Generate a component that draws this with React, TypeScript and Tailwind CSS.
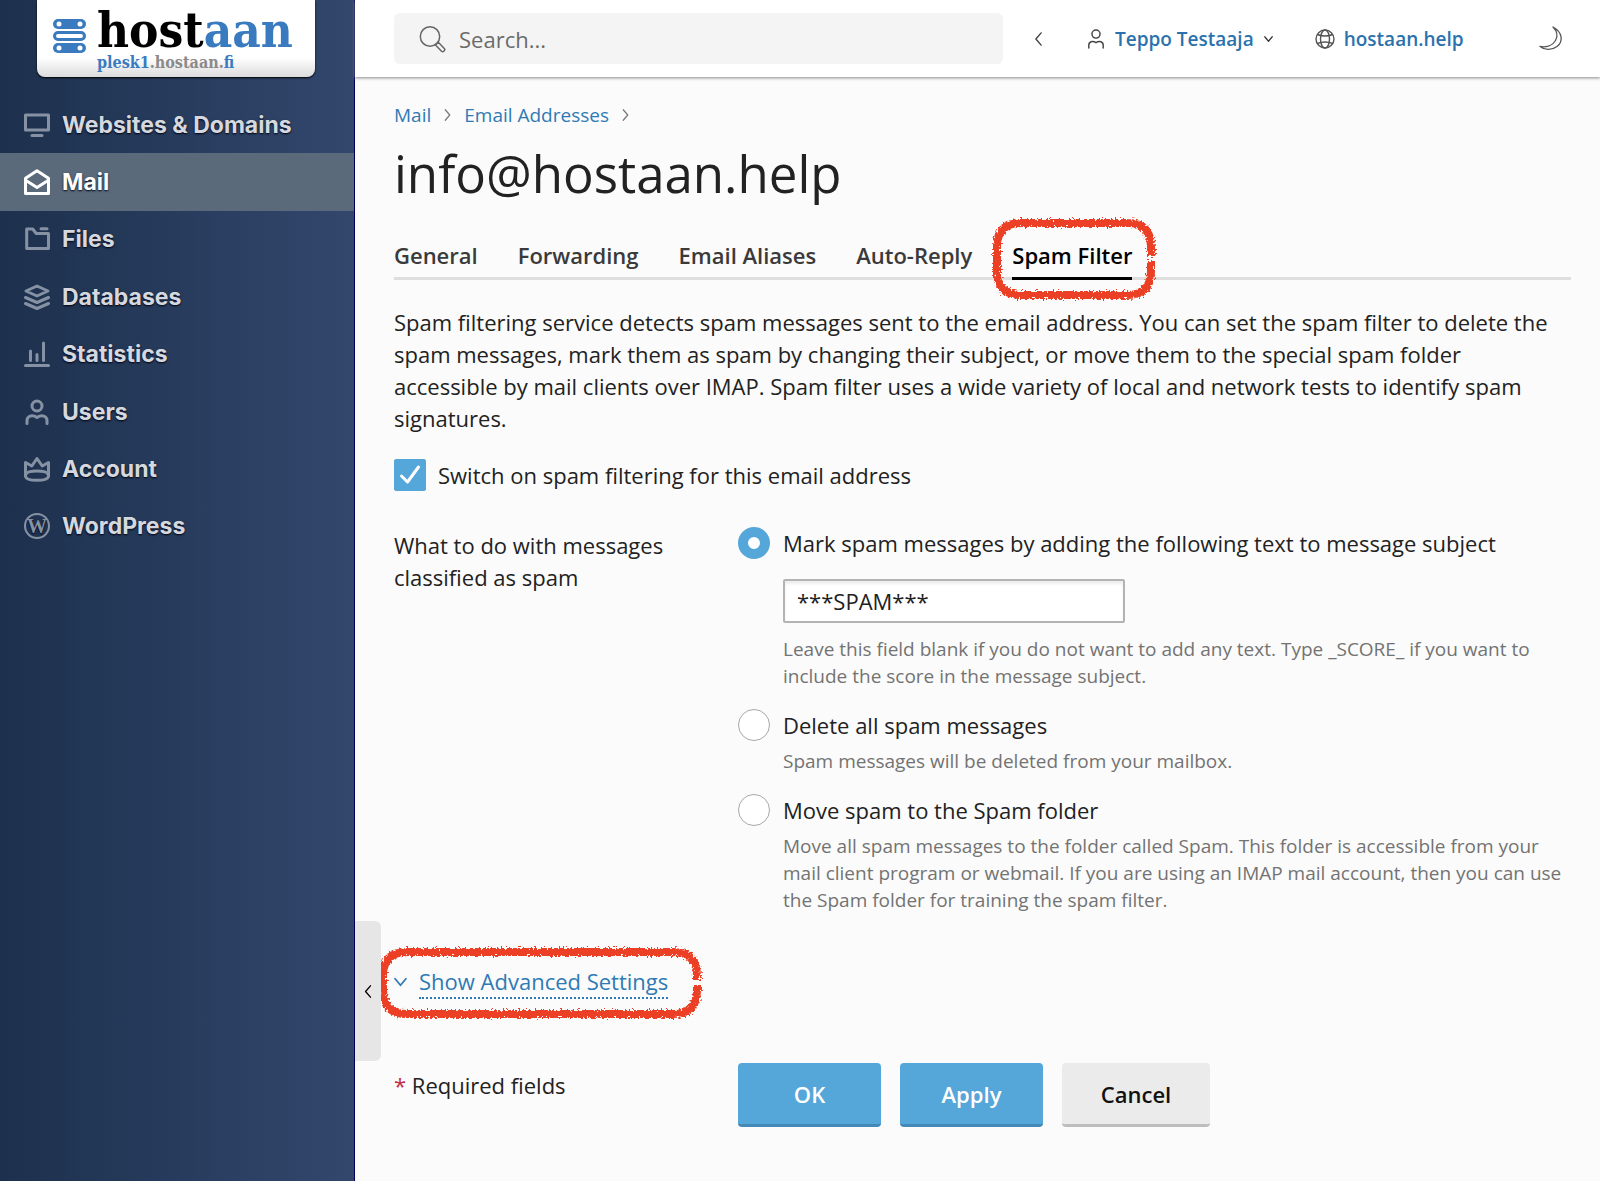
import { useState } from 'react';
import type { ReactNode } from 'react';

type IconProps = { children: ReactNode };

function NavIcon({ children }: IconProps) {
    return (
        <svg viewBox="0 0 26 26" className="size-[26px] shrink-0" fill="none" stroke="currentColor" strokeWidth="3" strokeLinecap="round" strokeLinejoin="round" aria-hidden="true">
            {children}
        </svg>
    );
}

const navItems = [
    {
        label: 'Websites & Domains',
        icon: (
            <NavIcon>
                <path d="M1.5 3h23v15h-23z" />
                <path d="M8 23.5h10" />
            </NavIcon>
        ),
    },
    {
        label: 'Mail',
        icon: (
            <NavIcon>
                <path d="M1.5 9.2 13 1.8l11.5 7.4v15.3h-23z" />
                <path d="m2 11.5 11 7 11-7" />
            </NavIcon>
        ),
    },
    {
        label: 'Files',
        icon: (
            <NavIcon>
                <path d="M2.7 3h6l3.5 4.5h12.3v15H2.7z" />
                <path d="M17 2.7h6" />
            </NavIcon>
        ),
    },
    {
        label: 'Databases',
        icon: (
            <NavIcon>
                <path d="M13 2 24 7l-11 5L2 7z" />
                <path d="m1.5 13.5 11.5 5 11.5-5" />
                <path d="m1.5 19.5 11.5 5 11.5-5" />
            </NavIcon>
        ),
    },
    {
        label: 'Statistics',
        icon: (
            <NavIcon>
                <path d="M1.5 24.5h23M6.5 10v9.5M13 13.5v6M19.5 2v17.5" />
            </NavIcon>
        ),
    },
    {
        label: 'Users',
        icon: (
            <NavIcon>
                <circle cx="13" cy="7" r="5" />
                <path d="M3 24.5v-3c0-4 5-6.5 10-3 5-3.5 10-1 10 3v3" />
            </NavIcon>
        ),
    },
    {
        label: 'Account',
        icon: (
            <NavIcon>
                <path d="M1.5 6.5v14c1 5 22 5 23 0v-14l-6.3 3.5L13 2.5 7.8 10z" />
                <path d="M2 18c2-4 20-4 22 0" />
            </NavIcon>
        ),
    },
    {
        label: 'WordPress',
        icon: (
            <NavIcon>
                <circle cx="13" cy="13" r="12" strokeWidth="2" />
                <text x="13" y="20" textAnchor="middle" fontFamily="Liberation Serif, serif" fontWeight="bold" fontSize="20" fill="currentColor" stroke="none">
                    W
                </text>
            </NavIcon>
        ),
    },
];

const tabs = ['General', 'Forwarding', 'Email Aliases', 'Auto-Reply', 'Spam Filter'];

function Chevron({ dir, className }: { dir: 'left' | 'right' | 'down'; className: string }) {
    const paths = {
        left: 'M9 1 3 8l6 7',
        right: 'M3 1l6 7-6 7',
        down: 'M1 5l5 6 5-6',
    };
    return (
        <svg viewBox="0 0 12 16" className={className} fill="none" stroke="currentColor" strokeWidth="1.6" strokeLinecap="round" strokeLinejoin="round" aria-hidden="true">
            <path d={paths[dir]} />
        </svg>
    );
}

// Hand-drawn marker outline around an element; w/h are the outer size
function Marker({ w, h, className }: { w: number; h: number; className: string }) {
    const r = 24;
    const p = 6;
    const mid = h / 2;
    const d = `M${w - p} ${mid - 3}V${p + r}Q${w - p} ${p} ${w - p - r} ${p}H${p + r}Q${p} ${p} ${p} ${p + r}V${h - p - r}Q${p} ${h - p} ${p + r} ${h - p}H${w - p - r}Q${w - p} ${h - p} ${w - p} ${h - p - r}V${mid + 2}`;
    return (
        <svg viewBox={`0 0 ${w} ${h}`} className={className} fill="none" aria-hidden="true">
            <defs>
                <filter id={`rough-${w}`} x="-5%" y="-10%" width="110%" height="120%">
                    <feTurbulence type="fractalNoise" baseFrequency="0.5" numOctaves="3" seed="4" />
                    <feDisplacementMap in="SourceGraphic" scale="8" xChannelSelector="R" yChannelSelector="G" />
                </filter>
            </defs>
            <path d={d} stroke="#ec4125" strokeWidth="8" filter={`url(#rough-${w})`} />
        </svg>
    );
}

function Logo() {
    return (
        <a href="#home" className="ml-[37px] flex h-[77px] w-[278px] gap-[11px] rounded-b-lg bg-linear-to-b from-white from-75% to-[#dcdcdc] pl-4 shadow-[0_1px_2px_#000]">
            <svg viewBox="0 0 33 34" className="mt-[19px] h-[34px] w-[33px] shrink-0" aria-hidden="true">
                <rect width="33" height="10" rx="5" fill="#3a7bc0" />
                <rect x="1.5" y="13.5" width="30" height="7" rx="3.5" fill="none" stroke="#3a7bc0" strokeWidth="3" />
                <rect y="24" width="33" height="10" rx="5" fill="#3a7bc0" />
                <g fill="#fff">
                    <circle cx="6" cy="5" r="2.5" />
                    <circle cx="27" cy="5" r="2.5" />
                    <circle cx="6" cy="29" r="2.5" />
                    <circle cx="27" cy="29" r="2.5" />
                </g>
            </svg>
            <span className="flex flex-col pt-[7px] font-['DejaVu_Serif_Condensed','DejaVu_Serif',serif] font-bold">
                <span className="text-[49px] leading-[46px] text-black">
                    host<span className="text-[#3a7bc0]">aan</span>
                </span>
                <span className="text-base leading-5 text-[#8a8a8a]">
                    <span className="text-[#3a7bc0]">plesk1</span>.hostaan.<span className="text-[#3a7bc0]">fi</span>
                </span>
            </span>
        </a>
    );
}

function Sidebar() {
    return (
        <aside className="w-[355px] shrink-0 border-r border-[#00005c] bg-linear-to-r from-[#1d304d] via-[#273c5d] to-[#33476d]">
            <Logo />
            <nav className="mt-[19px] grid h-[459px] auto-rows-fr font-[Inter,sans-serif] text-[23px] font-bold">
                {navItems.map((item) => (
                    <a
                        key={item.label}
                        href={`#${item.label}`}
                        className={`flex items-center gap-3 pl-6 [text-shadow:0_1px_2px_#001] ${item.label === 'Mail' ? 'bg-[#5a6a7b] text-white' : 'text-[#d5d9df]'}`}
                    >
                        <span className={item.label === 'Mail' ? '' : 'text-[#8692a4]'}>{item.icon}</span>
                        {item.label}
                    </a>
                ))}
            </nav>
        </aside>
    );
}

function Header() {
    return (
        <header className="relative flex h-[77px] items-center bg-white pr-[37px] pl-[39px] shadow-[0_1px_3px_#888]">
            <label className="flex h-[51px] w-[609px] items-center gap-3 rounded-md bg-[#f4f4f4] pl-[25px]">
                <svg viewBox="0 0 28 28" className="size-7 shrink-0" fill="none" stroke="#666" strokeWidth="1.5" aria-hidden="true">
                    <circle cx="11" cy="11.5" r="9.7" />
                    <path d="m16.5 20 2.8-2.8 6 6.2c1.5 1.7-1.2 4.3-2.8 2.8z" strokeLinejoin="round" />
                </svg>
                <input type="search" aria-label="Search" placeholder="Search..." className="w-full bg-transparent text-[22px] outline-none placeholder:text-[#6b6b6b]" />
            </label>
            <button type="button" aria-label="Collapse" className="ml-[30px] text-[#444]">
                <Chevron dir="left" className="h-[14px] w-[11px]" />
            </button>
            <button type="button" className="ml-[43px] flex items-center gap-[10px] text-[19px] font-semibold text-[#2b72ad]">
                <svg viewBox="0 0 20 24" className="h-6 w-[18px]" fill="none" stroke="#444" strokeWidth="1.6" strokeLinecap="round" aria-hidden="true">
                    <circle cx="10" cy="6.5" r="4.5" />
                    <path d="M2 22v-3c0-4 4-5.5 8-3 4-2.5 8-1 8 3v3" />
                </svg>
                Teppo Testaaja
                <Chevron dir="down" className="h-3 w-[9px] text-[#333]" />
            </button>
            <a href="#domain" className="ml-[42px] flex items-center gap-[9px] text-[19px] font-semibold text-[#2b72ad]">
                <svg viewBox="0 0 20 20" className="size-5" fill="none" stroke="#555" strokeWidth="1.4" aria-hidden="true">
                    <circle cx="10" cy="10" r="9" />
                    <ellipse cx="10" cy="10" rx="4.5" ry="9" />
                    <path d="M2.5 5.5c4 2 11 2 15 0M2.5 14.5c4-2 11-2 15 0" />
                </svg>
                hostaan.help
            </a>
            <button type="button" aria-label="Dark mode" className="ml-auto">
                <svg viewBox="0 0 24 26" className="h-[26px] w-6" fill="none" stroke="#555" strokeWidth="1.3" strokeLinejoin="round" aria-hidden="true">
                    <path d="M14 1C23 6 25 15 18 20.500 13 24.500 5 24 1 20.500 8 21.500 14 19 16.500 14.500 19 10 18 5 14 1z" />
                </svg>
            </button>
        </header>
    );
}

type RadioProps = {
    value: string;
    label: string;
    checked: boolean;
    onSelect: (value: string) => void;
    children: ReactNode;
};

function RadioOption({ value, label, checked, onSelect, children }: RadioProps) {
    return (
        <div>
            <label className="flex gap-[13px]">
                <input
                    type="radio"
                    name="spam-action"
                    value={value}
                    checked={checked}
                    onChange={() => onSelect(value)}
                    className="size-8 shrink-0 appearance-none rounded-full border border-[#a8a8a8] bg-white checked:border-[10px] checked:border-[#55a6d9]"
                />
                {label}
            </label>
            <div className="pl-[45px]">{children}</div>
        </div>
    );
}

function Hint({ children }: { children: ReactNode }) {
    return <p className="text-[19px] leading-[27px] text-[#737373]">{children}</p>;
}

const buttonBase = 'h-16 rounded-sm border-b-[3px] px-[38px] text-[22px] font-semibold';

export default function App() {
    const [enabled, setEnabled] = useState(true);
    const [action, setAction] = useState('mark');
    const [subject, setSubject] = useState('***SPAM***');

    return (
        <div className="flex min-h-screen bg-[#fbfbfb] font-['Open_Sans',sans-serif] text-[22px] leading-8 text-[#222]">
            <Sidebar />
            <div className="relative min-w-0 flex-1">
                <Header />
                <main className="pr-[29px] pb-[52px] pl-[39px]">
                    <nav aria-label="Breadcrumb" className="flex items-center gap-3 pt-6 text-[19px] leading-7 text-[#2f7ab5]">
                        <a href="#mail">Mail</a>
                        <Chevron dir="right" className="h-[14px] w-[9px] text-[#777]" />
                        <a href="#addresses">Email Addresses</a>
                        <Chevron dir="right" className="h-[14px] w-[9px] text-[#777]" />
                    </nav>
                    <h1 className="mt-2 text-[51px] leading-[72px]">info@hostaan.help</h1>

                    <div role="tablist" className="mt-[30px] flex gap-10 border-b-[3px] border-[#dedede] font-semibold text-[#3a3a3a]">
                        {tabs.map((tab) => {
                            const active = tab === 'Spam Filter';
                            return (
                                <button
                                    key={tab}
                                    type="button"
                                    role="tab"
                                    aria-selected={active}
                                    className={`relative -mb-[3px] border-b-[3px] pb-[6px] ${active ? 'border-black text-black' : 'border-transparent'}`}
                                >
                                    {tab}
                                    {active && <Marker w={166} h={84} className="absolute -top-[22px] -left-[21px] h-[84px] w-[166px] max-w-none" />}
                                </button>
                            );
                        })}
                    </div>

                    <p className="mt-[26px] pr-3">
                        Spam filtering service detects spam messages sent to the email address. You can set the spam filter to delete the spam messages, mark them as spam by changing their subject, or move them to the special spam folder accessible by mail clients over IMAP. Spam filter uses a wide variety of local and network tests to identify spam signatures.
                    </p>

                    <label className="mt-[25px] flex gap-3">
                        <span className="relative size-8">
                            <input
                                type="checkbox"
                                checked={enabled}
                                onChange={(e) => setEnabled(e.target.checked)}
                                className="block size-8 appearance-none rounded-xs border border-[#a8a8a8] bg-white checked:border-[#55a6d9] checked:bg-[#55a6d9]"
                            />
                            {enabled && (
                                <svg viewBox="0 0 32 32" className="pointer-events-none absolute inset-0 size-8" fill="none" stroke="#fff" strokeWidth="3" strokeLinecap="round" strokeLinejoin="round" aria-hidden="true">
                                    <path d="m7.5 17 6 6L24.5 8" />
                                </svg>
                            )}
                        </span>
                        Switch on spam filtering for this email address
                    </label>

                    <div className="mt-9 grid grid-cols-[300px_1fr] gap-x-11">
                        <p id="spam-action-label" className="pt-0.5">
                            What to do with messages classified as spam
                        </p>
                        <div role="radiogroup" aria-labelledby="spam-action-label" className="flex flex-col gap-[19px]">
                            <RadioOption value="mark" label="Mark spam messages by adding the following text to message subject" checked={action === 'mark'} onSelect={setAction}>
                                <input
                                    type="text"
                                    aria-label="Subject text"
                                    value={subject}
                                    onChange={(e) => setSubject(e.target.value)}
                                    className="mt-5 mb-[13px] block h-11 w-[342px] rounded-xs border-2 border-[#b3b3b3] bg-white px-3 shadow-[inset_0_3px_3px_#eee] outline-none"
                                />
                                <Hint>Leave this field blank if you do not want to add any text. Type _SCORE_ if you want to include the score in the message subject.</Hint>
                            </RadioOption>
                            <RadioOption value="delete" label="Delete all spam messages" checked={action === 'delete'} onSelect={setAction}>
                                <div className="pt-[7px]">
                                    <Hint>Spam messages will be deleted from your mailbox.</Hint>
                                </div>
                            </RadioOption>
                            <RadioOption value="move" label="Move spam to the Spam folder" checked={action === 'move'} onSelect={setAction}>
                                <div className="pt-[7px]">
                                    <Hint>Move all spam messages to the folder called Spam. This folder is accessible from your mail client program or webmail. If you are using an IMAP mail account, then you can use the Spam folder for training the spam filter.</Hint>
                                </div>
                            </RadioOption>
                        </div>
                    </div>

                    <button type="button" className="relative mt-[51px] flex items-center gap-3 text-[#2f7ab5]">
                        <Chevron dir="down" className="h-[18px] w-[13px]" />
                        <span className="border-b-2 border-dotted border-[#2f7ab5]">Show Advanced Settings</span>
                        <Marker w={326} h={74} className="absolute -top-[19px] -left-[17px] h-[74px] w-[326px] max-w-none" />
                    </button>

                    <div className="mt-16 grid grid-cols-[300px_1fr] gap-x-11">
                        <p className="pt-[6px]">
                            <span className="text-[#c02b45]">*</span> Required fields
                        </p>
                        <div className="flex gap-[19px]">
                            <button type="submit" className={`${buttonBase} min-w-[143px] border-[#4589b8] bg-[#55a6d9] text-white`}>OK</button>
                            <button type="button" className={`${buttonBase} min-w-[143px] border-[#4589b8] bg-[#55a6d9] text-white`}>Apply</button>
                            <button type="button" className={`${buttonBase} min-w-[148px] border-[#bdbdbd] bg-[#ebebeb] text-[#111]`}>Cancel</button>
                        </div>
                    </div>
                </main>

                <button type="button" aria-label="Hide sidebar" className="absolute bottom-[120px] left-0 flex h-[140px] w-[26px] items-center justify-center rounded-r-md bg-[#e6e6e6] text-black">
                    <Chevron dir="left" className="h-[13px] w-[10px]" />
                </button>
            </div>
        </div>
    );
}
